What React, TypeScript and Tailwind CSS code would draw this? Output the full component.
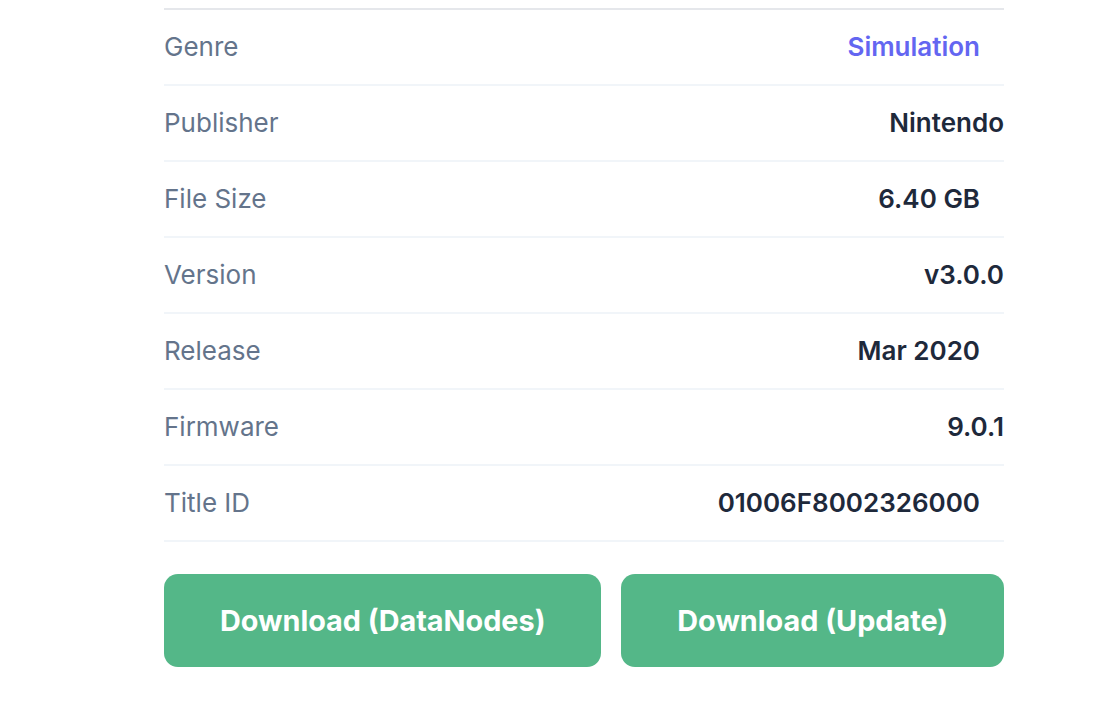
import React from "react";

const rows: { label: string; value: string; accent?: boolean; inset?: boolean }[] = [
  { label: "Genre", value: "Simulation", accent: true, inset: true },
  { label: "Publisher", value: "Nintendo" },
  { label: "File Size", value: "6.40 GB", inset: true },
  { label: "Version", value: "v3.0.0" },
  { label: "Release", value: "Mar 2020", inset: true },
  { label: "Firmware", value: "9.0.1" },
  { label: "Title ID", value: "01006F8002326000", inset: true },
];

export default function App() {
  return (
    <div
      className="min-h-[702px] w-full bg-white pl-[164px] pt-[8px]"
      style={{ fontFamily: "Inter, 'Noto Sans', sans-serif" }}
    >
      <div className="w-[840px]">
        <div className="border-t-2 border-[#e5e7eb]">
          {rows.map((r) => (
            <div
              key={r.label}
              className="flex h-[76px] items-center justify-between border-b-2 border-[#f1f5f9]"
            >
              <span className="text-[26px] leading-none text-[#64748b]">{r.label}</span>
              <span
                className={
                  "text-[26px] font-semibold leading-none " +
                  (r.accent ? "text-[#6366f1] " : "text-[#1e293b] ") +
                  (r.inset ? "mr-[24px]" : "")
                }
              >
                {r.value}
              </span>
            </div>
          ))}
        </div>
        <div className="mt-[32px] flex gap-[20px]">
          <button className="flex h-[93px] grow items-center justify-center rounded-[14px] bg-[#54b788] px-[20px] text-[28.8px] font-bold text-white">
            Download (DataNodes)
          </button>
          <button className="flex h-[93px] grow items-center justify-center rounded-[14px] bg-[#54b788] px-[20px] text-[28.8px] font-bold text-white">
            Download (Update)
          </button>
        </div>
      </div>
    </div>
  );
}
